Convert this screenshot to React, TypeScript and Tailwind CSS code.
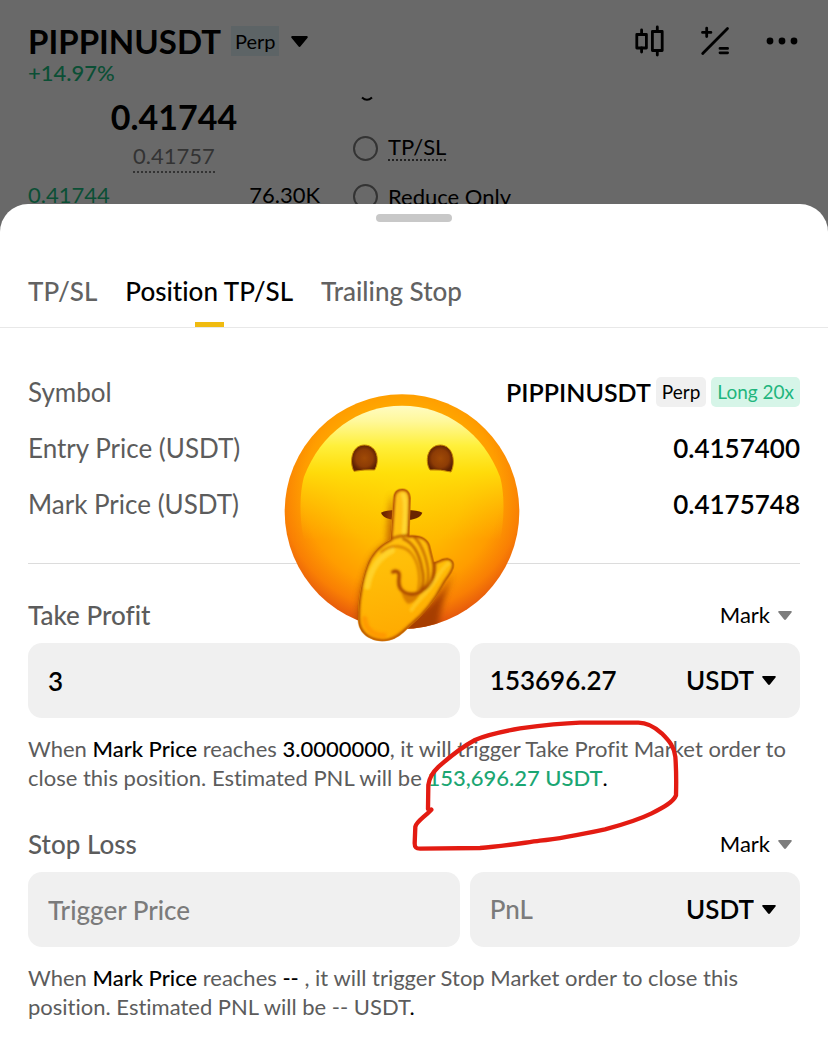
import React, { useState } from "react";

const TABS = ["TP/SL", "Position TP/SL", "Trailing Stop"];

const PRICES = [
  { label: "Entry Price (USDT)", value: "0.4157400" },
  { label: "Mark Price (USDT)", value: "0.4175748" },
];

function Caret({ className }: { className: string }) {
  return (
    <svg viewBox="0 0 14 9" className={className} fill="currentColor" aria-hidden="true">
      <path d="M1.2 0h11.6c.9 0 1.3 1 .7 1.6L7.9 8.5c-.5.6-1.3.6-1.8 0L.5 1.6C-.1 1 .3 0 1.2 0z" />
    </svg>
  );
}

function CandleIcon() {
  return (
    <svg viewBox="0 0 30 32" className="w-[30px] h-8" fill="none" stroke="currentColor" strokeWidth="2.8" strokeLinecap="round" strokeLinejoin="round">
      <rect x="2.8" y="9.5" width="9.6" height="13.5" />
      <path d="M7.6 5V9M7.6 23v4" />
      <rect x="18.4" y="6.5" width="9.8" height="19" />
      <path d="M23.3 2v4M23.3 26v4" />
    </svg>
  );
}

function CalcIcon() {
  return (
    <svg viewBox="0 0 30 30" className="w-[30px] h-[30px]" fill="none" stroke="currentColor" strokeWidth="2.8" strokeLinecap="round">
      <path d="M2.5 6.4h8.4M6.7 2.2v8.4M2.7 27.5L27.5 2.6M20 22.4h7.6M20 26.8h7.6" />
    </svg>
  );
}

function ShushFace() {
  return (
    <svg
      viewBox="42 42 708 744"
      className="absolute left-[284px] top-[66px] w-[236px] h-[248px] pointer-events-none"
      role="img"
      aria-label="Shushing face"
    >
      <defs>
        <radialGradient id="face" cx="395" cy="330" r="410" gradientUnits="userSpaceOnUse">
          <stop offset="0" stopColor="#ffcc00" />
          <stop offset=".45" stopColor="#ffb800" />
          <stop offset=".72" stopColor="#ff9d00" />
          <stop offset=".88" stopColor="#f97f04" />
          <stop offset="1" stopColor="#e65a0c" />
        </radialGradient>
        <linearGradient id="shine" x1="0" y1="75" x2="0" y2="480" gradientUnits="userSpaceOnUse">
          <stop offset="0" stopColor="#fffcc4" />
          <stop offset=".12" stopColor="#fff89a" />
          <stop offset=".3" stopColor="#fff03c" />
          <stop offset=".5" stopColor="#ffe40c" stopOpacity=".85" />
          <stop offset="1" stopColor="#ffcc00" stopOpacity="0" />
        </linearGradient>
        <linearGradient id="hand" x1="300" y1="330" x2="400" y2="790" gradientUnits="userSpaceOnUse">
          <stop offset="0" stopColor="#ffc21c" />
          <stop offset=".5" stopColor="#ffbe08" />
          <stop offset="1" stopColor="#ffa800" />
        </linearGradient>
        <radialGradient id="eye">
          <stop offset="0" stopColor="#a04a06" />
          <stop offset=".65" stopColor="#8d3c05" />
          <stop offset="1" stopColor="#5e2103" />
        </radialGradient>
        <filter id="soft" x="-30%" y="-30%" width="160%" height="160%">
          <feGaussianBlur stdDeviation="9" />
        </filter>
        <filter id="crease" x="-10%" y="-10%" width="120%" height="120%">
          <feGaussianBlur stdDeviation="2.4" />
        </filter>
        <clipPath id="disc">
          <circle cx="396" cy="395" r="352" />
        </clipPath>
        <clipPath id="palm">
          <path d="M370 352C372 334 382 326 397 326C413 326 421 338 422 354L418 466C448 462 474 474 480 496L492 546C506 544 514 534 532 534C548 536 556 550 551 564C544 584 530 598 520 616C496 662 462 704 428 732C404 752 382 784 336 784C290 780 264 754 264 716C262 668 274 600 290 556C302 522 328 494 361 478z" />
        </clipPath>
      </defs>
      <circle cx="396" cy="395" r="352" fill="url(#face)" />
      <path
        d="M396 77C530 77 640 160 690 290C704 340 704 420 690 480L102 480C88 420 88 340 102 290C152 160 262 77 396 77z"
        fill="url(#shine)"
      />
      {/* eyes */}
      <path d="M252 274C238 250 242 196 283 195C325 196 329 246 314 270Q283 268 252 274z" fill="url(#eye)" stroke="#c98a00" strokeWidth="3" />
      <path d="M480 270C464 246 470 196 511 195C552 196 557 250 543 276Q511 268 480 270z" fill="url(#eye)" stroke="#c98a00" strokeWidth="3" />
      {/* mouth */}
      <path d="M333 398Q350 388 395 390Q440 388 457 398Q448 422 395 420Q342 422 333 398z" fill="#6b2400" />
      {/* shadow thrown by the hand */}
      <g clipPath="url(#disc)">
        <path d="M553 572C520 640 470 690 400 730L410 770L505 770C505 690 530 630 553 572z" fill="#a63c00" filter="url(#soft)" />
        <path d="M366 340C354 400 352 440 350 490C310 505 285 560 268 640L254 740L300 740L380 480z" fill="#b64d00" opacity=".75" filter="url(#soft)" />
      </g>
      <g clipPath="url(#palm)">
        <rect x="250" y="310" width="320" height="490" fill="url(#hand)" />
        <g fill="none" strokeLinecap="round" filter="url(#crease)">
          <path d="M400 346C408 360 406 410 402 456" stroke="#ffe040" strokeWidth="14" opacity=".7" />
          <path d="M292 620C302 560 330 530 366 512" stroke="#ffdf40" strokeWidth="18" opacity=".6" />
          {/* folded fingers */}
          <path d="M361 478Q390 464 420 467" stroke="#b55800" strokeWidth="7" />
          <path d="M334 516C366 490 404 496 424 520C448 550 454 600 442 638" stroke="#d88200" strokeWidth="7" />
          <path d="M400 476C434 490 448 524 456 566C462 590 462 612 452 630" stroke="#b55800" strokeWidth="7" />
          <path d="M430 468C462 498 478 560 474 598Q472 614 462 622" stroke="#c26600" strokeWidth="7" />
          <path d="M492 546C496 590 482 622 460 628C442 648 406 648 390 624C380 602 392 588 386 578C380 572 374 572 368 576" stroke="#a84600" strokeWidth="10" />
          <path d="M394 634Q420 656 448 642Q438 668 414 672Q398 658 394 634z" fill="#d07000" opacity=".8" />
          <path d="M536 550C516 560 504 594 484 618C466 644 440 664 424 690" stroke="#ffd430" strokeWidth="12" opacity=".6" />
          <path d="M284 716C286 748 312 768 342 766" stroke="#ff9200" strokeWidth="16" opacity=".7" />
          <path
            d="M370 352C372 334 382 326 397 326C413 326 421 338 422 354L418 466C448 462 474 474 480 496L492 546C506 544 514 534 532 534C548 536 556 550 551 564C544 584 530 598 520 616C496 662 462 704 428 732C404 752 382 784 336 784C290 780 264 754 264 716C262 668 274 600 290 556C302 522 328 494 361 478z"
            stroke="#b04c00"
            strokeWidth="12"
          />
        </g>
      </g>
    </svg>
  );
}

function RedCircle() {
  return (
    <svg
      viewBox="36 390 804 396"
      className="absolute left-[384px] -top-[14px] w-[268px] h-[132px] pointer-events-none"
      fill="none"
      stroke="#e31b12"
      strokeWidth="13"
      strokeLinecap="round"
      strokeLinejoin="round"
      aria-hidden="true"
    >
      <path d="M94 659L84 657L85 585C88 560 100 545 116 530C150 500 180 474 225 450C260 434 310 424 360 415C420 407 480 400 540 398L715 398C745 398 765 412 785 430C810 455 822 470 826 500C829 540 829 580 828 616C820 636 790 652 755 670C710 692 660 706 615 718C550 732 480 746 420 752C360 760 300 770 240 774L60 776C46 776 44 770 44 760L46 710C50 694 70 684 94 659" />
    </svg>
  );
}

interface OrderSectionProps {
  id: string;
  title: string;
  trigger: string;
  pnl: string;
  children: React.ReactNode;
}

function OrderSection({ id, title, trigger, pnl, children }: OrderSectionProps) {
  return (
    <section>
      <div className="flex items-center justify-between mb-3">
        <h2 className="text-[26px] leading-8 font-medium text-[#5c5c5c]">{title}</h2>
        <label className="flex items-center gap-2 pr-2 text-[22px] leading-8 text-black">
          <select aria-label={`${title} trigger type`} className="appearance-none bg-transparent field-sizing-content outline-none">
            <option>Mark</option>
            <option>Last</option>
          </select>
          <Caret className="w-[14px] h-[9px] text-[#7d7d7d]" />
        </label>
      </div>
      <div className="grid grid-cols-[17fr_13fr] gap-[10px] text-[26px] font-semibold text-black">
        <input
          id={`${id}-price`}
          aria-label={`${title} trigger price`}
          placeholder="Trigger Price"
          defaultValue={trigger}
          className="min-w-0 h-[75px] px-5 rounded-[14px] bg-[#f0f0f0] outline-none placeholder:text-[#7b7b7b] placeholder:font-medium"
        />
        <div className="flex items-center min-w-0 h-[75px] pl-5 pr-6 rounded-[14px] bg-[#f0f0f0]">
          <input
            id={`${id}-pnl`}
            aria-label={`${title} PnL`}
            placeholder="PnL"
            defaultValue={pnl}
            className="flex-1 min-w-0 bg-transparent outline-none placeholder:text-[#7b7b7b] placeholder:font-medium"
          />
          <label className="flex items-center gap-2">
            <select aria-label={`${title} unit`} className="appearance-none bg-transparent field-sizing-content outline-none">
              <option>USDT</option>
              <option>%</option>
            </select>
            <Caret className="w-[14px] h-[9px]" />
          </label>
        </div>
      </div>
      <div className="relative mt-4 text-[22px] leading-[29px] text-[#5c5c5c]">{children}</div>
    </section>
  );
}

export default function App() {
  const [activeTab, setActiveTab] = useState("Position TP/SL");

  return (
    <div className="min-h-screen flex flex-col bg-[#696969] font-['Lato',sans-serif] [font-variant-ligatures:none] text-black">
      {/* dimmed trading page behind the sheet */}
      <header className="h-[212px] pt-[21px] px-7">
        <div className="flex items-center justify-between h-10">
          <button className="flex items-center">
            <span className="text-[33px] leading-10 font-bold">PIPPINUSDT</span>
            <span className="ml-[10px] px-1 h-[30px] leading-[30px] bg-[#5d6466] text-[20px]">Perp</span>
            <Caret className="ml-3 w-[17px] h-[11px]" />
          </button>
          <div className="flex items-center gap-9 pr-[2px]">
            <button aria-label="Chart"><CandleIcon /></button>
            <button aria-label="Calculator"><CalcIcon /></button>
            <button aria-label="More">
              <svg viewBox="0 0 32 8" className="w-8 h-2" fill="currentColor">
                <circle cx="4" cy="4" r="3.4" />
                <circle cx="16" cy="4" r="3.4" />
                <circle cx="28" cy="4" r="3.4" />
              </svg>
            </button>
          </div>
        </div>
        <p className="text-[22px] leading-6 font-medium text-[#0b4f35]">+14.97%</p>
        <div className="flex gap-[33px] pt-2">
          <div className="w-[292px] shrink-0">
            <p className="text-center text-[34px] leading-[48px] font-bold">0.41744</p>
            <p className="text-center leading-8">
              <span className="inline-block text-[22px] leading-[30px] text-[#333] border-b-2 border-dotted border-[#333]">0.41757</span>
            </p>
            <p className="flex justify-between pt-[7px] text-[22px] leading-7">
              <span className="text-[#0b4f35]">0.41744</span>
              <span>76.30K</span>
            </p>
          </div>
          <div className="text-[22px]">
            <svg viewBox="0 0 12 6" className="ml-2 mt-[3px] w-3 h-[6px]" fill="none" stroke="currentColor" strokeWidth="2">
              <path d="M1 1.5Q6 6 11 1.5" />
            </svg>
            <div className="flex flex-col gap-5 pt-8">
              <label className="flex items-center gap-[10px] h-7">
                <input type="radio" name="option" className="appearance-none size-[25px] rounded-full border-2 border-[#333]" />
                <span className="leading-6 border-b-2 border-dotted border-[#222]">TP/SL</span>
              </label>
              <label className="flex items-center gap-[10px] h-7">
                <input type="radio" name="option" className="appearance-none size-[25px] rounded-full border-2 border-[#333]" />
                <span>Reduce Only</span>
              </label>
            </div>
          </div>
        </div>
      </header>

      <main className="relative -mt-2 flex-1 pt-[10px] pb-6 bg-white rounded-t-[28px]">
        <div className="mx-auto w-[76px] h-2 rounded-full bg-[#c8c8c8]" />

        <nav className="flex gap-7 mt-[53px] px-7 border-b border-[#e8e8e8]">
          {TABS.map((tab) => (
            <button
              key={tab}
              onClick={() => setActiveTab(tab)}
              className={`flex flex-col items-center text-[26px] leading-8 font-medium ${
                activeTab === tab ? "text-black" : "text-[#626262]"
              }`}
            >
              {tab}
              <span className={`mt-[15px] w-[29px] h-[5px] ${activeTab === tab ? "bg-[#f0bb10]" : ""}`} />
            </button>
          ))}
        </nav>

        <div className="relative px-7">
          <dl className="flex flex-col gap-6 pt-12 pb-[43px] border-b border-[#dcdcdc] text-[26px] leading-8">
            <div className="flex items-center justify-between">
              <dt className="text-[#5c5c5c]">Symbol</dt>
              <dd className="flex items-center gap-[5px]">
                <span className="text-[25px] font-semibold">PIPPINUSDT</span>
                <span className="px-[6px] h-[30px] leading-[30px] rounded-[5px] bg-[#f0f0f0] text-[19px]">Perp</span>
                <span className="px-[6px] h-[30px] leading-[30px] rounded-[5px] bg-[#d6f5e8] text-[19px] text-[#1fb57e]">Long 20x</span>
              </dd>
            </div>
            {PRICES.map((row) => (
              <div key={row.label} className="flex items-center justify-between">
                <dt className="text-[#5c5c5c]">{row.label}</dt>
                <dd className="font-semibold">{row.value}</dd>
              </div>
            ))}
          </dl>
          <ShushFace />
        </div>

        <div className="flex flex-col gap-9 px-7 pt-[35px]">
          <OrderSection id="tp" title="Take Profit" trigger="3" pnl="153696.27">
            <p>
              When <span className="font-medium text-black">Mark Price</span> reaches{" "}
              <span className="font-medium text-black">3.0000000</span>, it will trigger Take Profit Market order to close
              this position. Estimated PNL will be <span className="font-medium text-[#1ba672]">153,696.27 USDT</span>
              <span className="text-black">.</span>
            </p>
            <RedCircle />
          </OrderSection>
          <OrderSection id="sl" title="Stop Loss" trigger="" pnl="">
            <p>
              When <span className="font-medium text-black">Mark Price</span> reaches{" "}
              <span className="font-medium text-black">--</span> , it will trigger Stop Market order to close this position.
              Estimated PNL will be -- USDT<span className="text-black">.</span>
            </p>
          </OrderSection>
        </div>
      </main>
    </div>
  );
}
